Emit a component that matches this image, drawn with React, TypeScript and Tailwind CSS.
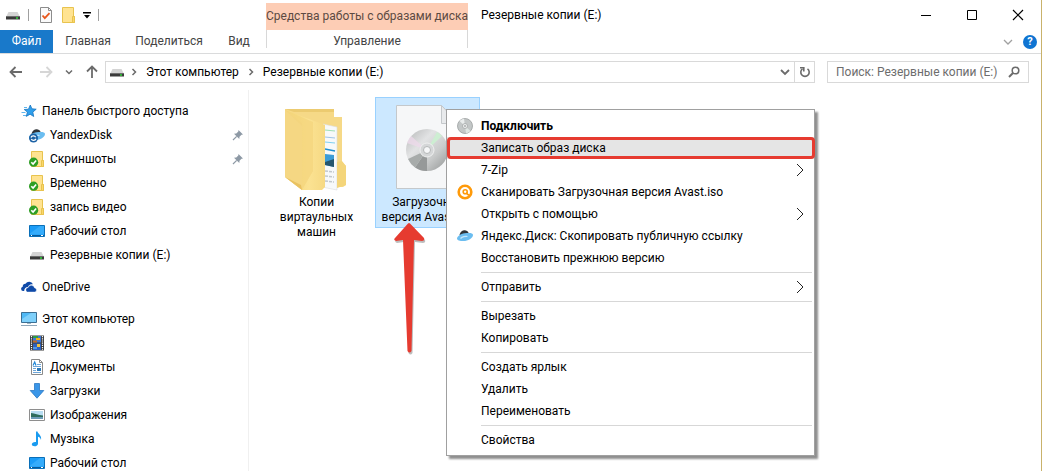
import { ReactNode } from "react";

type TreeItem = { label: string; icon: ReactNode; pinned?: boolean }
type TreeGroup = { label: string; icon: ReactNode; items: TreeItem[] }
type MenuItem = { label: string; icon?: ReactNode; bold?: boolean; marked?: boolean; submenu?: boolean }

function DriveIcon() {
    return (
        <svg width="16" height="16" viewBox="0 0 16 16" aria-hidden="true">
            <path d="M3.5 5h9l2 4h-13z" fill="#d4d4d4" />
            <path d="M1 9h14v3.5H1z" fill="#3a3a3a" />
            <path d="M1 9h14v1H1z" fill="#6e6e6e" />
            <rect x="11" y="10.3" width="2" height="1.4" fill="#2fe03a" />
        </svg>
    )
}

function FolderIcon({ synced }: { synced?: boolean }) {
    return (
        <svg width="16" height="16" viewBox="0 0 16 16" aria-hidden="true">
            <path d="M2.5.5h11v9h1v6h-12z" fill="#ffe391" stroke="#e8c34e" />
            <path d="M12.5 9.5h2v6h-2z" fill="#fbd76a" stroke="#e8c34e" />
            {synced && (
                <>
                    <circle cx="4.6" cy="11.2" r="4.6" fill="#2f9e24" />
                    <path d="M2.3 11.2l1.8 1.9 3-3.6" fill="none" stroke="#fff" strokeWidth="1.6" />
                </>
            )}
        </svg>
    )
}

function TaskIcon() {
    return (
        <svg width="14" height="16" viewBox="0 0 14 16" aria-hidden="true">
            <path d="M1.5.5h8l3 3v12h-11z" fill="#fafafa" stroke="#8c8c8c" />
            <path d="M9.5.5v3h3" fill="none" stroke="#8c8c8c" />
            <path d="M3.5 8.5l2.3 2.7 4.7-5" fill="none" stroke="#e8571c" strokeWidth="1.8" />
        </svg>
    )
}

function StarIcon() {
    return (
        <svg width="16" height="16" viewBox="0 0 16 16" aria-hidden="true">
            <path d="M9.3 2l1.6 3.8 4.3.4-3.4 2.9.9 4.4-3.6-2.3-3.8 2.2 1.1-4.3-3.2-2.6 4.3-.3z" fill="#2f9fec" stroke="#1673bf" strokeWidth=".8" />
            <path d="M3 4.5h3M.5 9.5h4M2 12.5h3" stroke="#5fb6ee" />
        </svg>
    )
}

function YandexDiskIcon({ synced }: { synced?: boolean }) {
    return (
        <svg width="16" height="16" viewBox="0 0 16 16" aria-hidden="true">
            <path d="M2.5 7c.5-3.6 3.1-5 5.5-4.8 2.3.2 3.8 1.8 3.8 3.8L6 8.5z" fill="#303438" />
            <path d="M0 10.5c.5-2.3 3.5-4.7 7.5-5.2 4-.6 8.500-.8 8.500 1.700 0 3.300-5 6-9.500 6C3 13 .2 12.500 0 10.500z" fill="#6bbdf0" />
            <path d="M3.5 10.5c1.5-1.5 5-2.7 7-2" fill="none" stroke="#c5e6fb" strokeWidth="1.3" />
            {synced && (
                <>
                    <circle cx="4.5" cy="11" r="4.5" fill="#1c62a5" />
                    <path d="M2 10.5c.7-2 3.8-2.2 4.7-.3M7 11.7c-.7 2-3.8 2.2-4.7.3" fill="none" stroke="#fff" strokeWidth="1.2" />
                </>
            )}
        </svg>
    )
}

function DesktopIcon() {
    return (
        <svg width="16" height="16" viewBox="0 0 16 16" aria-hidden="true">
            <path d="M.5 2.5h15v11H.5z" fill="#1b9cf7" stroke="#0a6fb8" />
            <path d="M1 10.5L11 3h4v8.5H1z" fill="#35acfb" />
            <path d="M1 12.5h14" stroke="#075a99" />
            <path d="M2 12.5h1M12 12.5h2" stroke="#fff" />
        </svg>
    )
}

function OneDriveIcon() {
    return (
        <svg width="16" height="16" viewBox="0 0 16 16" aria-hidden="true">
            <path d="M3.2 12H2a2.2 2.2 0 0 1-.3-4.3 3 3 0 0 1 2.8-3A4.3 4.3 0 0 1 12 5.2C8.5 4.8 7.3 6.7 7 8c-2.5.1-3.8 1.8-3.8 4z" fill="#0f4aa8" />
            <path d="M6.2 13a2.3 2.3 0 0 1 .9-4.4 3.4 3.4 0 0 1 6.5.3A2.1 2.1 0 0 1 14 13z" fill="#0f4aa8" stroke="#fff" strokeWidth=".4" />
        </svg>
    )
}

function ComputerIcon() {
    return (
        <svg width="16" height="16" viewBox="0 0 16 16" aria-hidden="true">
            <path d="M.5 1.5h15v10H.5z" fill="#4fb9f5" stroke="#3c6f93" />
            <path d="M1 8L10 2h5v9H1z" fill="#7fd0fa" />
            <path d="M6 12.5h4" stroke="#9fb4c2" />
            <path d="M0 14.5h16" stroke="#8fa6b8" />
        </svg>
    )
}

function VideoIcon() {
    return (
        <svg width="16" height="16" viewBox="0 0 16 16" aria-hidden="true">
            <path d="M1 .5h14v15H1z" fill="#3b3b3b" />
            <path d="M2.5 1v14M13.5 1v14" stroke="#fff" strokeWidth="1.2" strokeDasharray="1.2 1" />
            <path d="M4 1h8v6.5H4z" fill="#3d78d8" />
            <path d="M4 1h5v2H4z" fill="#2f9e44" />
            <path d="M7 3h4v2H7z" fill="#f2b31c" />
            <path d="M4 5.5h4v2H4z" fill="#c46a1f" />
            <path d="M4 8.5h8V15H4z" fill="#2d62c0" />
            <path d="M8 9h3v3H8z" fill="#f0c340" />
            <path d="M4 12h4v2H4z" fill="#4e97e8" />
        </svg>
    )
}

function DocumentIcon() {
    return (
        <svg width="16" height="16" viewBox="0 0 16 16" aria-hidden="true">
            <path d="M2.5.5h8l3 3v12h-11z" fill="#fff" stroke="#8a8a8a" />
            <path d="M10.5.5v3h3" fill="none" stroke="#8a8a8a" />
            <path d="M4 6.5l1.7-3.5L7 6.5" fill="none" stroke="#1f86d6" strokeWidth="1.2" />
            <path d="M8 5.5h4M4 7.5h8M4 9.5h3M4 11.5h3M4 13.5h8" stroke="#6ea6d8" />
            <path d="M8 9h4v3H8z" fill="#2b78b8" />
        </svg>
    )
}

function DownloadIcon() {
    return (
        <svg width="16" height="16" viewBox="0 0 16 16" aria-hidden="true">
            <path d="M5.5.5h5v7h4.3L8 15.2 1.2 7.5h4.3z" fill="#3a96e8" stroke="#2a78c4" strokeWidth=".8" />
        </svg>
    )
}

function PictureIcon() {
    return (
        <svg width="16" height="16" viewBox="0 0 16 16" aria-hidden="true">
            <path d="M.5 2.5h15v11H.5z" fill="#fff" stroke="#8e8e8e" />
            <path d="M2 4h12v8H2z" fill="#b8ddf2" />
            <path d="M2 6c4 0 7 2.5 12 2.5V10H2z" fill="#2f6d5e" />
            <path d="M2 10h12v2H2z" fill="#6c9bb8" />
        </svg>
    )
}

function MusicIcon() {
    return (
        <svg width="16" height="16" viewBox="0 0 16 16" aria-hidden="true">
            <path d="M7 .5h1.5c.5 2.5 4.5 3.8 3.5 8.5-.4-2-1.7-3-3-3.300v7c0 1.500-1.600 2.600-3.400 2.600-1.700 0-2.800-.8-2.800-2 0-1.600 2-2.700 4.200-2.300z" fill="#1a9bf0" />
        </svg>
    )
}

function PinIcon() {
    return (
        <svg width="12" height="12" viewBox="0 0 12 12" aria-hidden="true">
            <path d="M6.5 1L11 5.500l-1.500.3-2 2L7.300 10 2 4.700l2.300-.2 2-2z" fill="#8d99a5" />
            <path d="M4.7 7.3L1 11" stroke="#8d99a5" strokeWidth="1.2" />
        </svg>
    )
}

function DiscIcon() {
    return (
        <svg width="16" height="16" viewBox="0 0 16 16" aria-hidden="true">
            <circle cx="8" cy="8" r="7.5" fill="#c3c7c7" stroke="#9a9e9e" strokeWidth=".8" />
            <path d="M8 8L2.5 3A7.3 7.3 0 0 1 7 .8z" fill="#e9ecec" />
            <path d="M8 8l5.5 5A7.3 7.3 0 0 1 9 15.2z" fill="#dfe6e3" />
            <circle cx="8" cy="8" r="2.5" fill="#eef0f0" stroke="#a3a7a7" strokeWidth=".8" />
            <circle cx="8" cy="8" r="1" fill="#a9adad" />
        </svg>
    )
}

function AvastIcon() {
    return (
        <svg width="16" height="16" viewBox="0 0 16 16" aria-hidden="true">
            <circle cx="8" cy="8" r="6.3" fill="#fff" stroke="#ff9a0a" strokeWidth="2.6" />
            <circle cx="8.200" cy="7.800" r="2" fill="none" stroke="#ff9a0a" strokeWidth="1.600" />
            <path d="M9.600 8.500c.3 1.500 1.400 2.500 3 2.500" fill="none" stroke="#ff9a0a" strokeWidth="1.600" />
        </svg>
    )
}

function SmallChevron({ down }: { down?: boolean }) {
    return (
        <svg width="8" height="8" viewBox="0 0 8 8" fill="none" stroke="#6b6b6b" strokeWidth="1.5" aria-hidden="true">
            {down ? <path d="M1 2.5l3 3 3-3" /> : <path d="M2.5 1l3 3-3 3" />}
        </svg>
    )
}

function BigFolder() {
    return (
        <svg width="96" height="96" viewBox="1 0 96 96" aria-hidden="true">
            <defs>
                <linearGradient id="flap" x1="0" y1="0" x2="1" y2="0">
                    <stop offset="0" stopColor="#f5d675" />
                    <stop offset=".6" stopColor="#fbe292" />
                    <stop offset="1" stopColor="#f6d983" />
                </linearGradient>
            </defs>
            <path d="M17 11h49v8h8v45l4 4v19l-3 2H60L17 60z" fill="#f6d987" />
            <path d="M17 11h49v3H26z" fill="#eccb70" />
            <path d="M55 26l14 3v63l-15-3z" fill="#f7f9fa" stroke="#dcdcdc" strokeWidth=".6" />
            <path d="M57 32l10 1" stroke="#9ee0b4" strokeWidth="1" />
            <path d="M57 39l10 1" stroke="#9fc4e6" strokeWidth="1" />
            <path d="M57 44l10 1" stroke="#7fd0f2" strokeWidth="1" />
            <path d="M57 51l10 2" stroke="#1f8fd0" strokeWidth="1.5" />
            <path d="M57 56l9 1v12l-9-2z" fill="#3c9cd6" />
            <path d="M57 64l9-3v8l-9-2z" fill="#26566d" />
            <path d="M57 73l9 1M57 78l9 1M57 83l9 1" stroke="#c2c8cc" strokeWidth="1.5" strokeDasharray="3 1" />
            <path d="M17 12l40 15v62l-3 3H34L17 79z" fill="url(#flap)" />
            <path d="M17 12l17 13v67L17 79z" fill="#f5d783" />
            <path d="M17 79l17 13-1-5z" fill="#e9c262" />
            <path d="M17 12l28 12v49L34 92V28z" fill="#f3d47c" opacity=".7" />
            <path d="M69 64l5-1 4 5v19l-9 3z" fill="#f4d57a" />
        </svg>
    )
}

function BigDiscImage() {
    return (
        <svg width="96" height="96" viewBox="1 0 96 96" aria-hidden="true">
            <defs>
                <linearGradient id="disc" x1="0" y1="0" x2="1" y2="1">
                    <stop offset="0" stopColor="#b3b5b5" />
                    <stop offset=".35" stopColor="#e2e3e4" />
                    <stop offset=".65" stopColor="#c9cbcb" />
                    <stop offset="1" stopColor="#909393" />
                </linearGradient>
            </defs>
            <path d="M17.5 7.5h45l17 18v65h-62z" fill="#f6f7f8" stroke="#c4c8cb" />
            <path d="M62.5 7.5v18h17z" fill="#e8eaec" stroke="#c4c8cb" />
            <circle cx="48" cy="52" r="21" fill="url(#disc)" />
            <path d="M48 52L28 45a21 21 0 0 1 4-7z" fill="#ecd9ea" opacity=".8" />
            <path d="M48 52l10-18a21 21 0 0 1 5 4z" fill="#cdeed2" />
            <path d="M48 52L36 69.5a21 21 0 0 0 12 3.5z" fill="#969999" />
            <path d="M48 52L29 61a21 21 0 0 0 7 8.5z" fill="#a7abaa" />
            <circle cx="48" cy="52" r="7" fill="#d5d7d8" stroke="#eff0f0" />
            <circle cx="48" cy="52" r="3.5" fill="#f6f7f8" stroke="#b4b7b7" />
        </svg>
    )
}

const ribbonTabs = [
    { label: "Главная", width: "w-[70px]" },
    { label: "Поделиться", width: "w-[92px]" },
    { label: "Вид", width: "w-12" },
]

const groups: TreeGroup[] = [
    {
        label: "Панель быстрого доступа",
        icon: <StarIcon />,
        items: [
            { label: "YandexDisk", icon: <YandexDiskIcon synced />, pinned: true },
            { label: "Скриншоты", icon: <FolderIcon synced />, pinned: true },
            { label: "Временно", icon: <FolderIcon synced /> },
            { label: "запись видео", icon: <FolderIcon synced /> },
            { label: "Рабочий стол", icon: <DesktopIcon /> },
            { label: "Резервные копии (E:)", icon: <DriveIcon /> },
        ],
    },
    { label: "OneDrive", icon: <OneDriveIcon />, items: [] },
    {
        label: "Этот компьютер",
        icon: <ComputerIcon />,
        items: [
            { label: "Видео", icon: <VideoIcon /> },
            { label: "Документы", icon: <DocumentIcon /> },
            { label: "Загрузки", icon: <DownloadIcon /> },
            { label: "Изображения", icon: <PictureIcon /> },
            { label: "Музыка", icon: <MusicIcon /> },
            { label: "Рабочий стол", icon: <DesktopIcon /> },
        ],
    },
]

const menuSections: MenuItem[][] = [
    [
        { label: "Подключить", icon: <DiscIcon />, bold: true },
        { label: "Записать образ диска", marked: true },
        { label: "7-Zip", submenu: true },
        { label: "Сканировать Загрузочная версия Avast.iso", icon: <AvastIcon /> },
        { label: "Открыть с помощью", submenu: true },
        { label: "Яндекс.Диск: Скопировать публичную ссылку", icon: <YandexDiskIcon /> },
        { label: "Восстановить прежнюю версию" },
    ],
    [{ label: "Отправить", submenu: true }],
    [{ label: "Вырезать" }, { label: "Копировать" }],
    [{ label: "Создать ярлык" }, { label: "Удалить" }, { label: "Переименовать" }],
    [{ label: "Свойства" }],
]

function Header() {
    return (
        <header className="flex border-b border-[#dadbdc] text-[#444]">
            <div className="w-[266px] shrink-0">
                <div className="flex h-[30px] items-center pl-[5px]">
                    <DriveIcon />
                    <span className="ml-[7px] h-3 w-px bg-[#a0a0a0]" />
                    <button aria-label="Свойства" className="ml-[10px]"><TaskIcon /></button>
                    <button aria-label="Новая папка" className="ml-[7px]"><FolderIcon /></button>
                    <button aria-label="Настройка панели" className="ml-[7px]">
                        <svg width="8" height="8" viewBox="0 0 8 8"><path d="M0 1h8v1.5H0zM1 4h6L4 7.5z" fill="#000" /></svg>
                    </button>
                    <span className="ml-[7px] h-3 w-px bg-[#a0a0a0]" />
                </div>
                <nav className="flex h-[23px]">
                    <button className="w-[53px] bg-[#1979ca] text-white">Файл</button>
                    {ribbonTabs.map((tab) => (
                        <button key={tab.label} className={tab.width}>{tab.label}</button>
                    ))}
                </nav>
            </div>
            <div className="w-[202px] shrink-0 pt-[3px]">
                <div className="flex h-[27px] items-center justify-center bg-[#fdcdb5] whitespace-nowrap text-[#5c4a42]">Средства работы с образами диска</div>
                <button className="h-[18px] w-full border-x border-[#d8d8d8] pt-1">Управление</button>
            </div>
            <div className="min-w-0 flex-1">
                <div className="flex h-[30px] items-center justify-between pl-[13px]">
                    <h1 className="text-black">Резервные копии (E:)</h1>
                    <div className="flex gap-[34px] pr-[17px]">
                        <button aria-label="Свернуть">
                            <svg width="12" height="12" viewBox="0 0 12 12"><path d="M1 6.5h10" stroke="#000" /></svg>
                        </button>
                        <button aria-label="Развернуть">
                            <svg width="12" height="12" viewBox="0 0 12 12"><path d="M1.5 1.5h9v9h-9z" fill="none" stroke="#000" /></svg>
                        </button>
                        <button aria-label="Закрыть">
                            <svg width="12" height="12" viewBox="0 0 12 12"><path d="M1 1l10 10M11 1L1 11" stroke="#000" strokeWidth="1.2" /></svg>
                        </button>
                    </div>
                </div>
                <div className="flex h-[23px] items-center justify-end gap-[10px] pr-1">
                    <button aria-label="Развернуть ленту">
                        <svg width="10" height="8" viewBox="0 0 10 8"><path d="M1 2l4 4 4-4" fill="none" stroke="#a0a0a0" strokeWidth="1.3" /></svg>
                    </button>
                    <button aria-label="Справка" className="flex size-[14px] items-center justify-center rounded-full bg-[#0f74d2] text-[11px] leading-none font-bold text-white">?</button>
                </div>
            </div>
        </header>
    )
}

function AddressBar() {
    return (
        <div className="flex h-9 items-center pr-3 pl-[9px]">
            <div className="flex w-24 shrink-0 items-center">
                <button aria-label="Назад">
                    <svg width="14" height="14" viewBox="0 0 14 14" fill="none" stroke="#6b6b6b" strokeWidth="1.8"><path d="M13 7H2M6.5 2L1.5 7l5 5" /></svg>
                </button>
                <button aria-label="Вперед" className="ml-4">
                    <svg width="14" height="14" viewBox="0 0 14 14" fill="none" stroke="#d6d6d6" strokeWidth="1.8"><path d="M1 7h11M7.5 2l5 5-5 5" /></svg>
                </button>
                <button aria-label="Последние расположения" className="ml-3"><SmallChevron down /></button>
                <button aria-label="Вверх" className="ml-3">
                    <svg width="14" height="14" viewBox="0 0 14 14" fill="none" stroke="#6b6b6b" strokeWidth="1.8"><path d="M7 13V2M2 6.5l5-5 5 5" /></svg>
                </button>
            </div>
            <div className="flex h-[22px] min-w-0 flex-1 items-center border border-[#d9d9d9] pl-[3px]">
                <DriveIcon />
                <span className="ml-[5px]"><SmallChevron /></span>
                <button className="ml-2">Этот компьютер</button>
                <span className="ml-2"><SmallChevron /></span>
                <button className="ml-2">Резервные копии (E:)</button>
                <button aria-label="Предыдущие расположения" className="mr-1 ml-auto">
                    <svg width="10" height="8" viewBox="0 0 10 8"><path d="M1 2l4 4 4-4" fill="none" stroke="#6b6b6b" strokeWidth="1.8" /></svg>
                </button>
                <button aria-label="Обновить" className="flex h-full w-5 items-center justify-center border-l border-[#d9d9d9]">
                    <svg width="12" height="12" viewBox="0 0 12 12" fill="none" stroke="#6b6b6b" strokeWidth="1.6">
                        <path d="M8.5 2.8a4.2 4.2 0 1 1-5 0" />
                        <path d="M1 1.8h3.8v3.7" />
                    </svg>
                </button>
            </div>
            <label className="ml-3 flex h-[22px] w-[202px] items-center border border-[#d9d9d9] px-2">
                <input aria-label="Поиск" placeholder="Поиск: Резервные копии (E:)" className="w-0 flex-1 outline-none placeholder:text-[#6d6d6d]" />
                <svg width="12" height="12" viewBox="0 0 12 12" fill="none" stroke="#6b6b6b" aria-hidden="true">
                    <circle cx="7.5" cy="4.5" r="3.3" strokeWidth="1.5" />
                    <path d="M5 7L1 11" strokeWidth="2" />
                </svg>
            </label>
        </div>
    )
}

function Sidebar() {
    return (
        <nav className="flex w-[249px] shrink-0 flex-col gap-2 border-r border-[#f0f0f0] pt-[9px]">
            {groups.map((group) => (
                <div key={group.label}>
                    <a href="#" className="flex h-6 items-center gap-[5px] pl-[21px]">
                        {group.icon}
                        {group.label}
                    </a>
                    {group.items.map((item) => (
                        <a key={item.label} href="#" className="flex h-6 items-center gap-[5px] pr-1 pl-[29px]">
                            {item.icon}
                            <span className="flex-1">{item.label}</span>
                            {item.pinned && <PinIcon />}
                        </a>
                    ))}
                </div>
            ))}
        </nav>
    )
}

function ContextMenu() {
    return (
        <div role="menu" className="absolute top-[19px] left-[197px] w-[369px] border border-[#a0a0a0] bg-white pt-[5px] pb-1 shadow-[3px_3px_2px_#8f8f8f]">
            {menuSections.map((section, i) => (
                <div key={i}>
                    {i > 0 && <hr className="my-[3px] mr-[2px] ml-[34px] border-[#d7d7d7]" />}
                    {section.map((item) => (
                        <button
                            key={item.label}
                            role="menuitem"
                            className={`relative flex h-[22px] w-full items-center pr-[10px] pl-[10px] text-left whitespace-nowrap ${item.bold ? "font-bold" : ""} ${item.marked ? "bg-[#e5e5e5]" : ""}`}
                        >
                            <span className="w-6 shrink-0">{item.icon}</span>
                            <span className="flex-1">{item.label}</span>
                            {item.submenu && (
                                <svg width="8" height="12" viewBox="0 0 8 12" aria-hidden="true"><path d="M1 0l6 6-6 6" fill="none" stroke="#222" /></svg>
                            )}
                            {item.marked && <span className="absolute inset-y-0 left-0 -right-px rounded-[4px] border-3 border-[#e63b30]" />}
                        </button>
                    ))}
                </div>
            ))}
        </div>
    )
}

function RedArrow() {
    return (
        <svg width="32" height="134" viewBox="0 0 32 134" className="absolute top-[132px] left-[145px]" aria-hidden="true">
            <path d="M14 1.5Q15 .5 16 1.5L30 16q1 3-2 3l-8-1-2.500 111q-2 3-4 0L9 18l-7 1q-3-1-1-3z" fill="#bdbdbd" transform="translate(1 2)" />
            <path d="M14 1.5Q15 .5 16 1.5L30 16q1 3-2 3l-8-1-2.500 111q-2 3-4 0L9 18l-7 1q-3-1-1-3z" fill="#e63b30" />
        </svg>
    )
}

export default function App() {
    return (
        <div className="flex h-screen flex-col overflow-hidden border-r border-[#c9b26b] bg-white font-[Roboto,'Noto_Sans',sans-serif] text-[12px] leading-[15px] text-black">
            <Header />
            <AddressBar />
            <div className="flex min-h-0 flex-1">
                <Sidebar />
                <main className="relative flex flex-1 items-start gap-[6px] pt-[7px] pl-[15px]">
                    <button className="flex w-[105px] flex-col items-center border border-transparent">
                        <BigFolder />
                        <span className="pt-px">Копии виртаульных машин</span>
                    </button>
                    <button className="flex w-[105px] flex-col items-center border border-[#99d1ff] bg-[#cce8ff] pb-[2px]">
                        <BigDiscImage />
                        <span className="pt-px">Загрузочная версия Avast.iso</span>
                    </button>
                    <RedArrow />
                    <ContextMenu />
                </main>
            </div>
        </div>
    )
}
